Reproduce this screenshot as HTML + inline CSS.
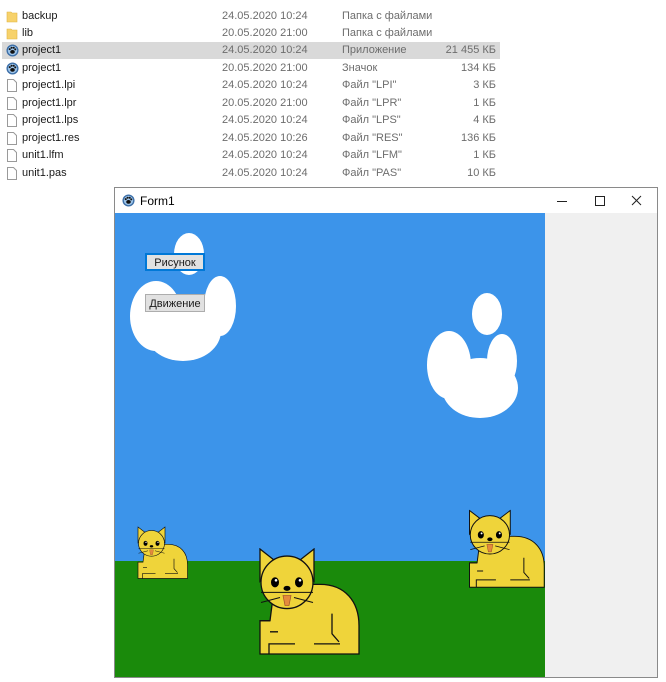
<!DOCTYPE html>
<html><head><meta charset="utf-8"><style>
body{margin:0;width:666px;height:682px;background:#fff;position:relative;overflow:hidden;font-family:"Liberation Sans",sans-serif;font-size:11px;color:#1a1a1a}
.row{position:absolute;left:2px;width:498px;height:17px;line-height:17px}
.row span{position:absolute;white-space:nowrap}
.n{left:20px}.d{left:220px;color:#6d6d6d}.t{left:340px;color:#6d6d6d}.s{right:4px;color:#6d6d6d}
.ic{position:absolute;left:4px;top:2px;width:12px;height:13px}
.win{position:absolute;left:114px;top:187px;width:542px;height:489px;border:1px solid #8a8a8a;background:#f0f0f0}
.btn{position:absolute;width:60px;height:18px;background:#e1e1e1;border:1px solid #adadad;font-size:11px;text-align:center;line-height:18px;box-sizing:border-box}
</style></head><body>
<svg width="0" height="0" style="position:absolute">
<defs>
<symbol id="fold" viewBox="0 0 12 13"><path d="M1 2h4l1 1h5v9H1z" fill="#f7d26b" stroke="#e0b545" stroke-width=".6"/></symbol>
<symbol id="file" viewBox="0 0 12 13"><path d="M1.5 .5h6l3 3v9h-9z" fill="#fff" stroke="#9a9a9a"/></symbol>
<symbol id="paw" viewBox="0 0 14 14"><circle cx="7" cy="7" r="6.5" fill="#3d6fa8"/><circle cx="7" cy="7" r="5" fill="#9cc3e8"/><ellipse cx="7" cy="8.5" rx="2.5" ry="2" fill="#111"/><circle cx="4" cy="5.5" r="1.1" fill="#111"/><circle cx="6" cy="4" r="1.1" fill="#111"/><circle cx="8.3" cy="4" r="1.1" fill="#111"/><circle cx="10" cy="5.8" r="1.1" fill="#111"/></symbol>
<symbol id="cat" viewBox="-1 -1 102 107">
<g stroke="#111" stroke-width="1.3" fill="#efd43a">
<path d="M0 0 L0 32 L18 14 Z"/><path d="M54 0 L54 32 L36 14 Z"/>
<path d="M0 71 L10 71 L14 40 L30 35 L60 35 C85 35 99 52 99 76 L99 104 L0 104 Z"/>
<circle cx="27" cy="33" r="26"/>
<path d="M72 64 L72 84 L79 92 M54 94 L80 94 M9 104 L9 94 L35 94 M0 71 L10 71 M10 82 L18 82" fill="none"/>
<path d="M1 43 L53 43 M1 53 L20 48 M53 53 L34 48" fill="none" stroke-width="1"/>
</g>
<ellipse cx="15" cy="33" rx="4" ry="5" fill="#000"/><ellipse cx="39" cy="33" rx="4" ry="5" fill="#000"/>
<circle cx="16" cy="31" r="1.3" fill="#fff"/><circle cx="40" cy="31" r="1.3" fill="#fff"/>
<ellipse cx="27" cy="39" rx="3.5" ry="2.5" fill="#000"/>
<path d="M23 46 L31 46 L29 56 L25 56 Z" fill="#e48b3c" stroke="#a0522d" stroke-width=".7"/>
</symbol>
</defs></svg>

<div class="row" style="top:8px"><svg class="ic"><use href="#fold"/></svg><span class="n">backup</span><span class="d">24.05.2020 10:24</span><span class="t">Папка с файлами</span></div>
<div class="row" style="top:25px"><svg class="ic"><use href="#fold"/></svg><span class="n">lib</span><span class="d">20.05.2020 21:00</span><span class="t">Папка с файлами</span></div>
<div class="row" style="top:42px;background:#d9d9d9"><svg class="ic" viewBox="0 0 14 14" style="width:13px;height:13px"><use href="#paw"/></svg><span class="n">project1</span><span class="d">24.05.2020 10:24</span><span class="t">Приложение</span><span class="s">21 455 КБ</span></div>
<div class="row" style="top:60px"><svg class="ic" style="width:13px;height:13px"><use href="#paw"/></svg><span class="n">project1</span><span class="d">20.05.2020 21:00</span><span class="t">Значок</span><span class="s">134 КБ</span></div>
<div class="row" style="top:77px"><svg class="ic"><use href="#file"/></svg><span class="n">project1.lpi</span><span class="d">24.05.2020 10:24</span><span class="t">Файл "LPI"</span><span class="s">3 КБ</span></div>
<div class="row" style="top:95px"><svg class="ic"><use href="#file"/></svg><span class="n">project1.lpr</span><span class="d">20.05.2020 21:00</span><span class="t">Файл "LPR"</span><span class="s">1 КБ</span></div>
<div class="row" style="top:112px"><svg class="ic"><use href="#file"/></svg><span class="n">project1.lps</span><span class="d">24.05.2020 10:24</span><span class="t">Файл "LPS"</span><span class="s">4 КБ</span></div>
<div class="row" style="top:130px"><svg class="ic"><use href="#file"/></svg><span class="n">project1.res</span><span class="d">24.05.2020 10:26</span><span class="t">Файл "RES"</span><span class="s">136 КБ</span></div>
<div class="row" style="top:147px"><svg class="ic"><use href="#file"/></svg><span class="n">unit1.lfm</span><span class="d">24.05.2020 10:24</span><span class="t">Файл "LFM"</span><span class="s">1 КБ</span></div>
<div class="row" style="top:165px"><svg class="ic"><use href="#file"/></svg><span class="n">unit1.pas</span><span class="d">24.05.2020 10:24</span><span class="t">Файл "PAS"</span><span class="s">10 КБ</span></div>

<div class="win">
<div style="position:absolute;left:0;top:0;width:542px;height:25px;background:#fff"></div>
<svg style="position:absolute;left:7px;top:6px" width="13" height="13"><use href="#paw"/></svg>
<div style="position:absolute;left:25px;top:6px;font-size:12px;color:#000">Form1</div>
<svg style="position:absolute;left:430px;top:0" width="112" height="25" stroke="#222" fill="none" stroke-width="1">
<path d="M12 13.5h10"/><rect x="50.5" y="8.5" width="9" height="9"/><path d="M87 8l9 9M96 8l-9 9"/></svg>
<svg style="position:absolute;left:0;top:25px" width="430" height="464">
<rect width="430" height="464" fill="#3c94ea"/>
<rect y="348" width="430" height="116" fill="#1a8a0b"/>
<g fill="#fff">
<ellipse cx="74" cy="41" rx="15" ry="21"/><ellipse cx="41" cy="103" rx="26" ry="35"/><ellipse cx="105" cy="93" rx="16" ry="30"/><ellipse cx="68" cy="118" rx="38" ry="30"/>
<ellipse cx="372" cy="101" rx="15" ry="21"/><ellipse cx="334" cy="152" rx="22" ry="34"/><ellipse cx="387" cy="148" rx="15" ry="27"/><ellipse cx="365" cy="175" rx="38" ry="30"/>
</g>
<svg x="22" y="313" width="51" height="53" viewBox="-1 -1 102 107" preserveAspectRatio="none"><use href="#cat"/></svg>
<svg x="353" y="296" width="77" height="79" viewBox="-1 -1 102 107" preserveAspectRatio="none"><use href="#cat"/></svg>
<svg x="143" y="334" width="102" height="108" viewBox="-1 -1 102 107" preserveAspectRatio="none"><use href="#cat"/></svg>
</svg>
<div class="btn" style="left:30px;top:65px;border:2px solid #0078d7;line-height:16px">Рисунок</div>
<div class="btn" style="left:30px;top:106px">Движение</div>
</div>
</body></html>
